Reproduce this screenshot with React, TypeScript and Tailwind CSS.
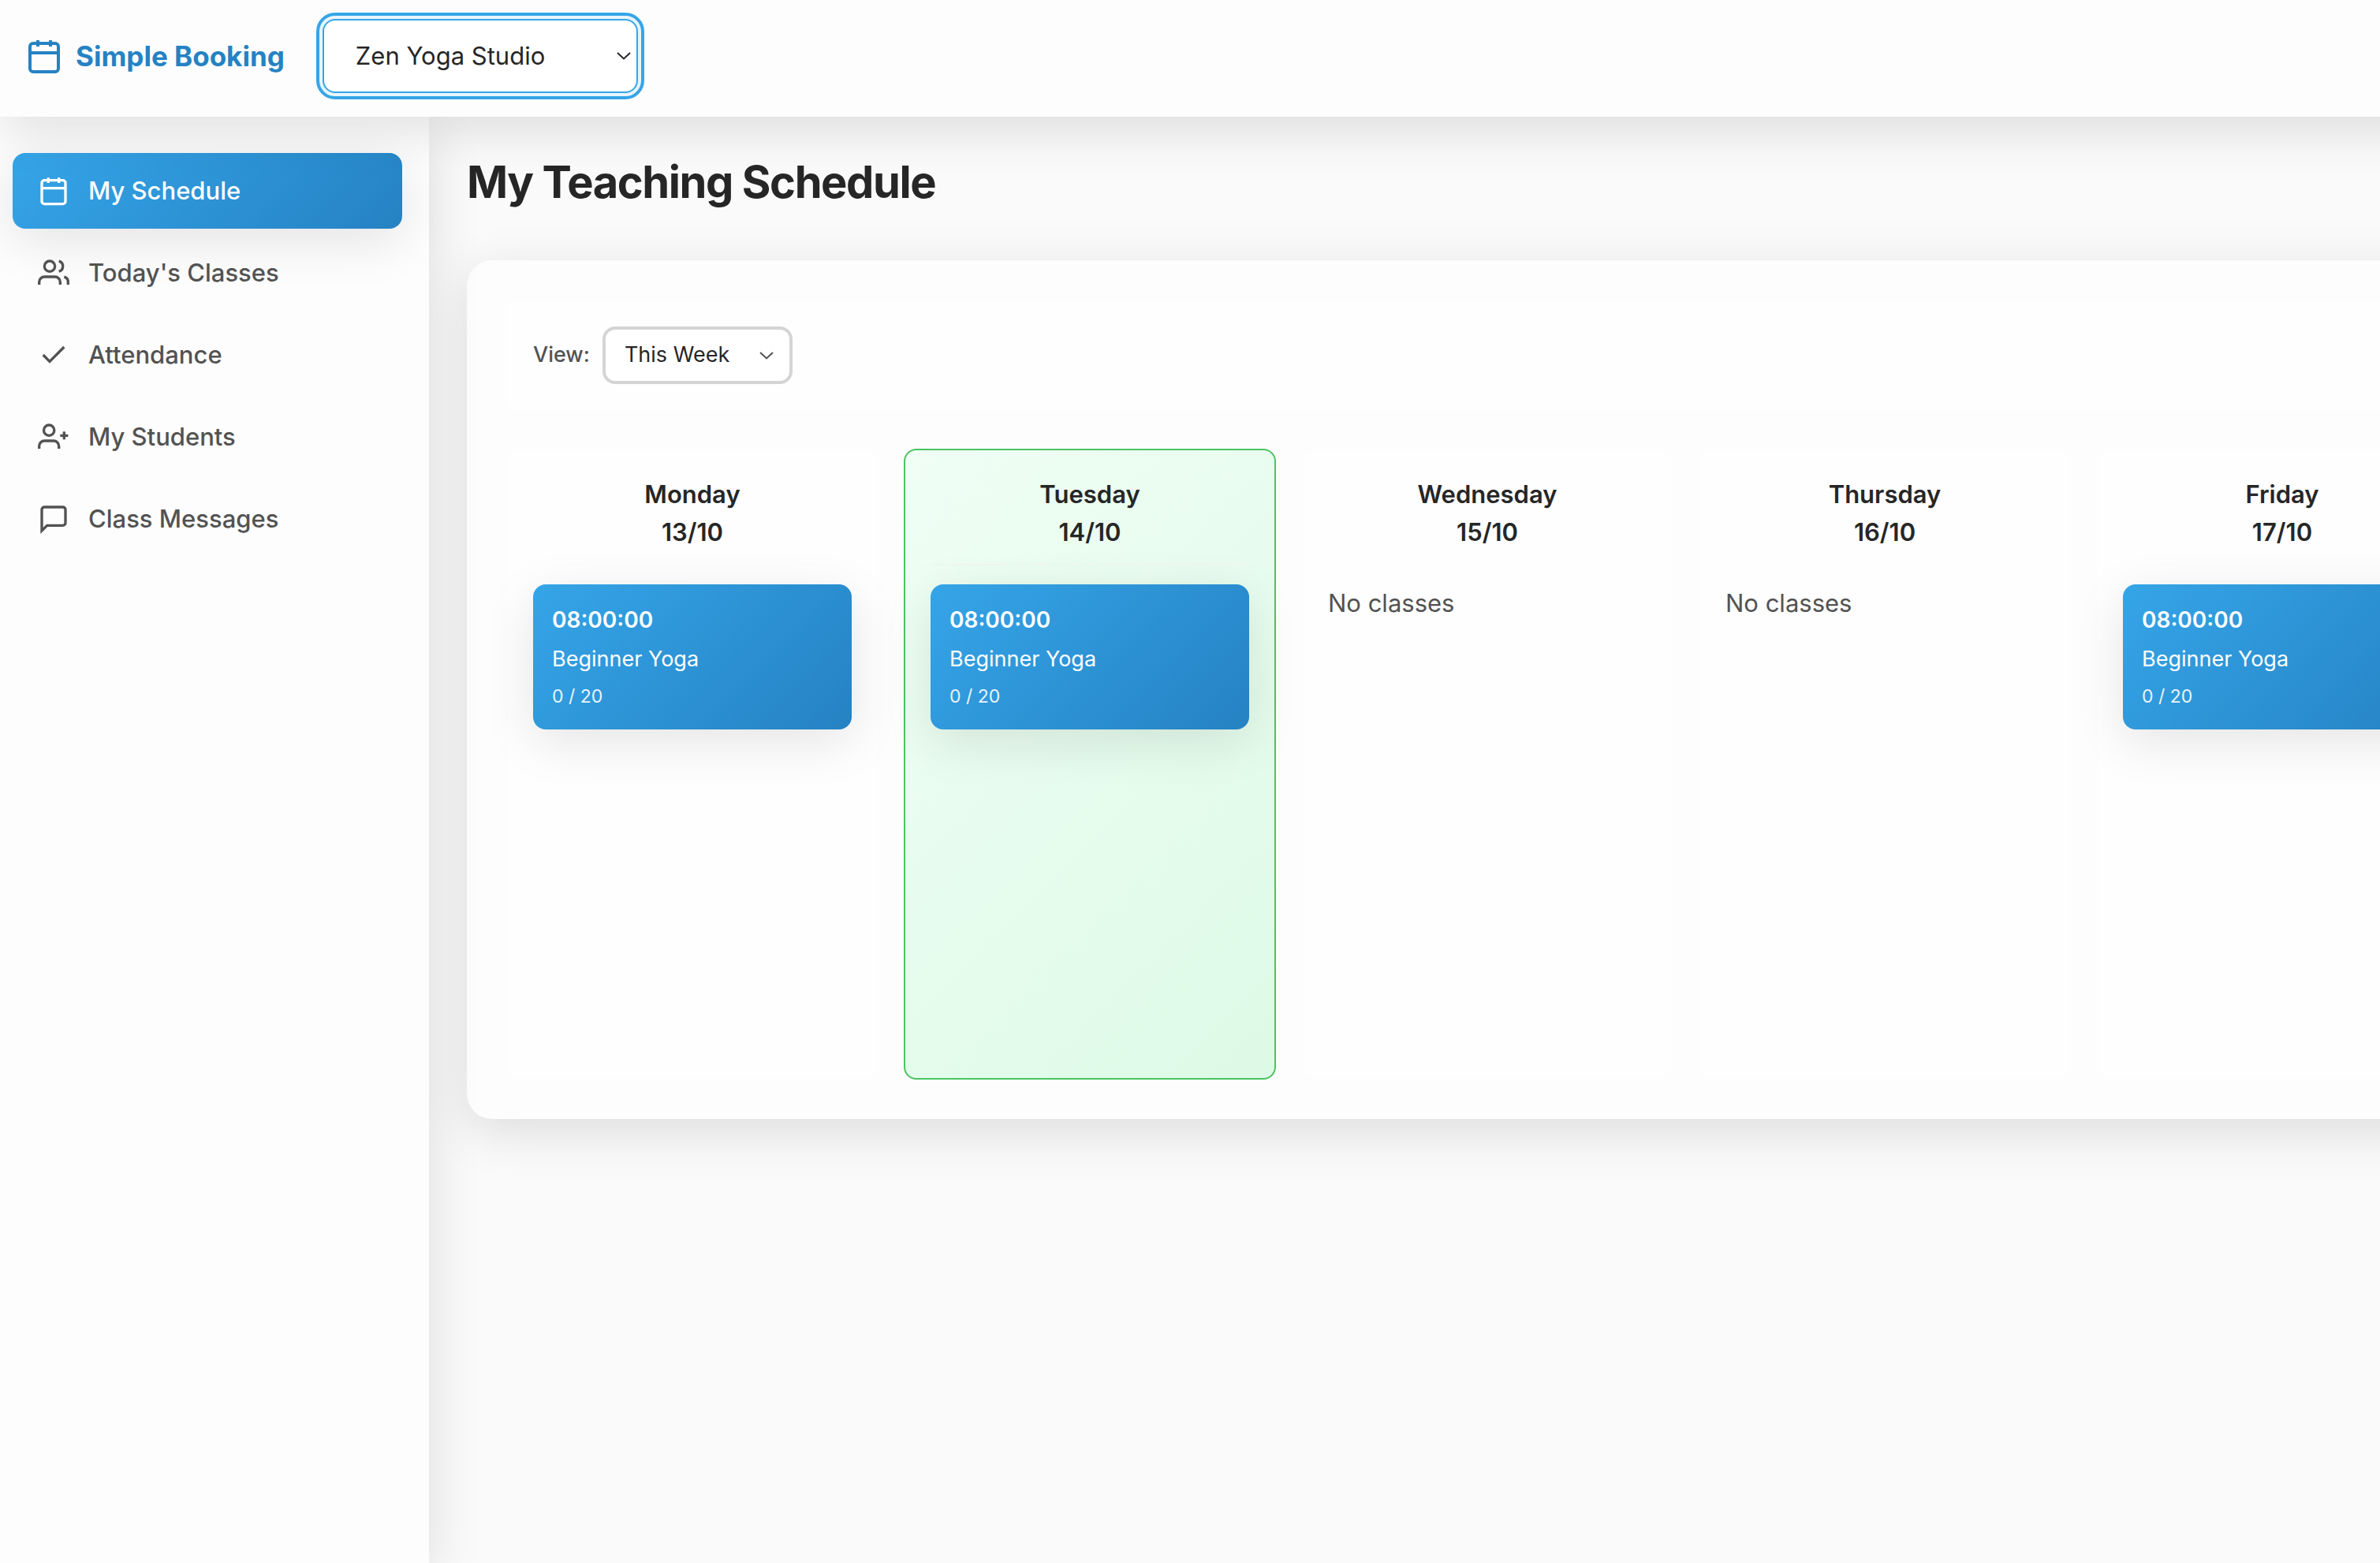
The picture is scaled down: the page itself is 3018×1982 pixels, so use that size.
import { useState } from "react";
import type { ReactNode } from "react";

type YogaClass = { time: string; name: string; booked: number; capacity: number };
type Day = { name: string; date: string; today?: boolean; classes: YogaClass[] };

const beginner: YogaClass = {
  time: "08:00:00",
  name: "Beginner Yoga",
  booked: 0,
  capacity: 20,
};

const days: Day[] = [
  { name: "Monday", date: "13/10", classes: [beginner] },
  { name: "Tuesday", date: "14/10", today: true, classes: [beginner] },
  { name: "Wednesday", date: "15/10", classes: [] },
  { name: "Thursday", date: "16/10", classes: [] },
  { name: "Friday", date: "17/10", classes: [beginner] },
];

function Icon({ className, children }: { className: string; children: ReactNode }) {
  return (
    <svg
      className={className}
      viewBox="0 0 24 24"
      fill="none"
      stroke="currentColor"
      strokeWidth="2"
      aria-hidden="true"
    >
      {children}
    </svg>
  );
}

const calendarPaths = (
  <>
    <rect x="3" y="4" width="18" height="18" rx="2" ry="2" />
    <path d="M16 2v4M8 2v4M3 10h18" />
  </>
);

const navItems = [
  { label: "My Schedule", paths: calendarPaths },
  {
    label: "Today's Classes",
    paths: (
      <>
        <path d="M17 21v-2a4 4 0 0 0-4-4H5a4 4 0 0 0-4 4v2" />
        <circle cx="9" cy="7" r="4" />
        <path d="M23 21v-2a4 4 0 0 0-3-3.87M16 3.13a4 4 0 0 1 0 7.75" />
      </>
    ),
  },
  { label: "Attendance", paths: <path d="M20 6 9 17l-5-5" /> },
  {
    label: "My Students",
    paths: (
      <>
        <path d="M16 21v-2a4 4 0 0 0-4-4H5a4 4 0 0 0-4 4v2" />
        <circle cx="8.5" cy="7" r="4" />
        <path d="M20 8v6M23 11h-6" />
      </>
    ),
  },
  {
    label: "Class Messages",
    paths: <path d="M21 15a2 2 0 0 1-2 2H7l-4 4V5a2 2 0 0 1 2-2h14a2 2 0 0 1 2 2z" />,
  },
];

function Chevron({ className }: { className: string }) {
  return (
    <svg
      className={`pointer-events-none absolute top-1/2 h-[10px] w-[18px] -translate-y-1/2 ${className}`}
      viewBox="0 0 18 10"
      fill="none"
      stroke="currentColor"
      strokeWidth="2"
      aria-hidden="true"
    >
      <path d="M1 1l8 7.5L17 1" />
    </svg>
  );
}

function ClassCard({ item }: { item: YogaClass }) {
  return (
    <button
      type="button"
      className="flex w-full flex-col gap-2 rounded-2xl bg-linear-135 from-[#35a5e8] to-[#2582c3] p-6 text-left text-white shadow-[0_16px_64px_rgba(0,0,0,0.1)]"
    >
      <span className="text-[28px] leading-[42px] font-semibold">{item.time}</span>
      <span className="text-[27px] leading-[42px]">{item.name}</span>
      <span className="text-[23px] leading-9 opacity-90">
        {item.booked} / {item.capacity}
      </span>
    </button>
  );
}

function DayColumn({ day }: { day: Day }) {
  return (
    <section
      className={`min-h-[800px] w-[472px] shrink-0 rounded-2xl border-2 p-8 ${
        day.today
          ? "border-[#4ac463] bg-linear-135 from-[#f0fef5] to-[#ddfae6]"
          : "border-[#fdfdfd] bg-[#fefefe]"
      }`}
    >
      <h2
        className={`mb-6 border-b-2 pb-4 text-center text-[31px] leading-[48px] font-semibold text-[#262626] ${
          day.today ? "border-[#edf8f0]" : "border-[#fdfdfd]"
        }`}
      >
        {day.name}
        <br />
        {day.date}
      </h2>
      {day.classes.map((item) => (
        <ClassCard key={item.time} item={item} />
      ))}
      {day.classes.length === 0 && (
        <p className="text-[31px] leading-[48px] text-[#525252]">No classes</p>
      )}
    </section>
  );
}

export default function App() {
  const [active, setActive] = useState("My Schedule");

  return (
    <div className="overflow-hidden bg-[#fafafa] font-['Inter','Liberation_Sans',sans-serif] text-[#262626]">
      {/* grows with the week grid, so the bar always spans it */}
      <div className="flex min-h-screen w-max min-w-full flex-col">
        <header className="relative z-20 flex items-center gap-12 bg-[#fdfdfd] px-8 pt-6 pb-[30px] shadow-[0_16px_64px_rgba(0,0,0,0.12)]">
          <a href="#" className="flex items-center gap-4 text-[#2582c3]">
            <Icon className="size-12">{calendarPaths}</Icon>
            <span className="text-[35px] leading-[54px] font-bold">Simple Booking</span>
          </a>
          <div className="relative">
            <select
              aria-label="Studio"
              className="h-[94px] w-[400px] appearance-none rounded-2xl border-2 border-[#35a5e8] bg-white px-10 text-[31px] shadow-[0_0_0_6px_rgba(53,165,232,0.1)] outline-4 outline-offset-4 outline-[#35a5e8]"
            >
              <option>Zen Yoga Studio</option>
            </select>
            <Chevron className="right-[9px]" />
          </div>
        </header>

        <div className="flex flex-1">
          <nav className="relative z-10 flex w-[544px] shrink-0 flex-col gap-2 bg-[#fdfdfd] pt-[46px] pr-[34px] pl-4 shadow-[0_16px_64px_rgba(0,0,0,0.12)]">
            {navItems.map((item) => (
              <button
                key={item.label}
                type="button"
                onClick={() => setActive(item.label)}
                className={`flex h-24 items-center gap-6 rounded-2xl px-8 text-[31px] font-medium ${
                  active === item.label
                    ? "bg-linear-135 from-[#35a5e8] to-[#2582c3] text-white shadow-[0_16px_64px_rgba(0,0,0,0.1)]"
                    : "text-[#525252]"
                }`}
              >
                <Icon className="size-10 shrink-0">{item.paths}</Icon>
                {item.label}
              </button>
            ))}
          </nav>

          <main className="flex-1 p-12">
            <h1 className="mb-16 text-[56px] leading-[70px] font-bold tracking-tight">
              My Teaching Schedule
            </h1>

            <div className="rounded-[32px] bg-[#fdfdfd] p-[50px] shadow-[0_16px_64px_rgba(0,0,0,0.12)]">
              <div className="mb-12 flex items-center gap-4 rounded-2xl bg-[#fefefe] p-[34px]">
                <label htmlFor="view" className="text-[27px] font-medium text-[#525252]">
                  View:
                </label>
                <div className="relative">
                  <select
                    id="view"
                    className="h-[73px] w-[241px] appearance-none rounded-2xl border-4 border-[#d4d4d4] bg-white px-6 text-[27px]"
                  >
                    <option>This Week</option>
                  </select>
                  <Chevron className="right-6 text-[#525252]" />
                </div>
              </div>

              <div className="flex gap-8">
                {days.map((day) => (
                  <DayColumn key={day.name} day={day} />
                ))}
              </div>
            </div>
          </main>
        </div>
      </div>
    </div>
  );
}
